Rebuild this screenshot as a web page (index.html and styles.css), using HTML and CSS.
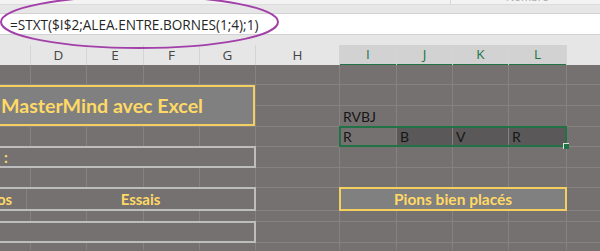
FILE: index.html
```html
<!DOCTYPE html>
<html lang="fr">
<head>
<meta charset="utf-8">
<title>MasterMind avec Excel</title>
<link rel="stylesheet" href="styles.css">
</head>
<body>
<div class="app">
  <div class="ribbon"><span class="ribbon-sep"></span><span class="ribbon-label">Nombre</span></div>
  <div class="namebar"></div>
  <div class="formula"><span class="formula-text">=STXT($I$2;ALEA.ENTRE.BORNES(1;4);1)</span></div>
  <div class="spacer"></div>
  <div class="heads">
    <div class="head"></div>
    <div class="head">D</div>
    <div class="head">E</div>
    <div class="head">F</div>
    <div class="head">G</div>
    <div class="head">H</div>
    <div class="head sel">I</div>
    <div class="head sel">J</div>
    <div class="head sel">K</div>
    <div class="head sel">L</div>
    <div class="head blank"></div>
  </div>
  <div class="sheet">
    <div class="box title"><span>MasterMind avec Excel</span></div>
    <div class="box gray r5">:</div>
    <div class="box gray r7 split"><span class="part-a">os</span><span class="part-b">Essais</span></div>
    <div class="box gray r9"></div>
    <div class="box pions">Pions bien placés</div>
    <div class="cell rvbj">RVBJ</div>
    <div class="cell pick c7">R</div>
    <div class="cell pick c8 shade">B</div>
    <div class="cell pick c9 shade">V</div>
    <div class="cell pick c10 shade">R</div>

    <div class="cell"></div><div class="cell"></div><div class="cell"></div><div class="cell"></div><div class="cell"></div><div class="cell"></div><div class="cell"></div><div class="cell"></div><div class="cell"></div><div class="cell"></div>
    <div class="cell"></div><div class="cell"></div><div class="cell"></div><div class="cell"></div><div class="cell"></div><div class="cell"></div><div class="cell"></div><div class="cell"></div><div class="cell"></div><div class="cell"></div>
    <div class="cell"></div><div class="cell"></div><div class="cell"></div><div class="cell"></div><div class="cell"></div><div class="cell"></div><div class="cell"></div><div class="cell"></div><div class="cell"></div><div class="cell"></div>
    <div class="cell"></div><div class="cell"></div><div class="cell"></div><div class="cell"></div><div class="cell"></div><div class="cell"></div><div class="cell"></div><div class="cell"></div><div class="cell"></div><div class="cell"></div>
    <div class="cell"></div><div class="cell"></div><div class="cell"></div><div class="cell"></div><div class="cell"></div><div class="cell"></div><div class="cell"></div><div class="cell"></div><div class="cell"></div><div class="cell"></div>
    <div class="cell"></div><div class="cell"></div><div class="cell"></div><div class="cell"></div><div class="cell"></div><div class="cell"></div><div class="cell"></div><div class="cell"></div><div class="cell"></div><div class="cell"></div>
    <div class="cell"></div><div class="cell"></div><div class="cell"></div><div class="cell"></div><div class="cell"></div><div class="cell"></div><div class="cell"></div><div class="cell"></div><div class="cell"></div><div class="cell"></div>
    <div class="cell"></div><div class="cell"></div><div class="cell"></div><div class="cell"></div><div class="cell"></div><div class="cell"></div><div class="cell"></div><div class="cell"></div><div class="cell"></div><div class="cell"></div>
    <div class="cell"></div><div class="cell"></div><div class="cell"></div><div class="cell"></div><div class="cell"></div><div class="cell"></div><div class="cell"></div><div class="cell"></div><div class="cell"></div><div class="cell"></div>

    <div class="selection"><span class="handle"></span></div>
  </div>
  <svg class="ellipse" width="300" height="60" viewBox="0 0 300 60">
    <ellipse cx="139.5" cy="22" rx="138.5" ry="26" fill="none" stroke="#a23fa8" stroke-width="2"/>
  </svg>
</div>
</body>
</html>
```

FILE: styles.css
```css
* { box-sizing: border-box; }
html, body { margin: 0; padding: 0; }
body {
  width: 600px;
  height: 251px;
  overflow: hidden;
  background: #767171;
  font-family: "Open Sans", "Noto Sans", sans-serif;
}
.app {
  position: relative;
  width: 600px;
  height: 251px;
  overflow: hidden;
}
.ribbon {
  position: relative;
  height: 5px;
  background: #f3f3f3;
  border-bottom: 1px solid #dcdcdc;
}
.ribbon-sep {
  position: absolute;
  left: 450px;
  top: 0;
  width: 1px;
  height: 4px;
  background: #d8d8d8;
}
.ribbon-label {
  position: absolute;
  left: 506px;
  top: -11px;
  font-size: 11px;
  color: #a8a8a8;
}
.namebar {
  height: 9px;
  background: #e6e6e6;
  border-bottom: 1px solid #d2d2d2;
}
.formula {
  height: 21px;
  background: #ffffff;
  border-bottom: 1px solid #d2d2d2;
  display: flex;
  align-items: center;
  padding-left: 10px;
}
.formula-text {
  font-size: 13.6px;
  color: #262626;
}
.spacer {
  height: 10px;
  background: #e6e6e6;
}
.heads {
  display: grid;
  grid-template-columns: 30px 55px 56px 55px 55px 83px 56px 55px 55px 57px 1fr;
  column-gap: 1px;
  height: 20px;
  background: #d4d4d4;
}
.head {
  background: #e6e6e6;
  color: #444444;
  font-size: 13.5px;
  display: flex;
  align-items: center;
  justify-content: center;
  padding-bottom: 1px;
  border-bottom: 1px solid #c8c8c8;
}
.head.sel {
  background: #d2d2d2;
  color: #217346;
  border-bottom: 2px solid #217346;
}
.sheet {
  position: relative;
  display: grid;
  grid-template-columns: 30px 55px 56px 55px 55px 83px 56px 55px 55px 57px 1fr;
  grid-template-rows: 19px 20px 20px 19px 20px 19px 22px 10px 20px 20px;
  grid-auto-rows: 20px;
  gap: 1px;
  background: #878282;
  height: 185px;
}
.cell {
  background: #767171;
  font-family: "Lato", "Open Sans", sans-serif;
  font-size: 14px;
  color: #161616;
  padding-left: 3px;
  display: flex;
  align-items: flex-end;
  line-height: 18px;
}
.box {
  display: flex;
  align-items: center;
  font-family: "Lato", "Open Sans", sans-serif;
  font-weight: bold;
  color: #ffd966;
  grid-column: 1 / 6;
  z-index: 1;
}
.title {
  grid-row: 2 / 4;
  background: #808080;
  border: 2px solid #f2cf5e;
  border-left: none;
  font-size: 19.6px;
  padding-left: 1px;
}
.gray {
  background: #767171;
  border: 2px solid #bdbdbd;
  border-left: none;
  margin: -1px -1px -1px 0;
  font-size: 15px;
}
.r5 { grid-row: 5; padding-left: 4px; }
.r7 { grid-row: 7; }
.r9 { grid-row: 9; }
.split { align-items: stretch; }
.part-a {
  width: 30px;
  display: flex;
  align-items: center;
  margin-left: -3px;
  border-right: 1px solid #878282;
}
.part-b {
  flex: 1;
  display: flex;
  align-items: center;
  justify-content: center;
}
.pions {
  grid-column: 7 / 11;
  grid-row: 7;
  background: #808080;
  border: 2px solid #f2cf5e;
  margin: -1px;
  justify-content: center;
  font-size: 15.5px;
}
.rvbj { grid-column: 7; grid-row: 3; }
.pick { grid-row: 4; z-index: 1; }
.c7 { grid-column: 7; }
.c8 { grid-column: 8; }
.c9 { grid-column: 9; }
.c10 { grid-column: 10; }
.shade { background: #5a5858; }
.selection {
  grid-column: 7 / 11;
  grid-row: 4;
  margin: -1px;
  border: 2px solid #217346;
  z-index: 2;
  position: relative;
  pointer-events: none;
}
.handle {
  position: absolute;
  right: -4px;
  bottom: -4px;
  width: 6px;
  height: 6px;
  background: #217346;
  border-top: 1px solid #e0e0e0;
  border-left: 1px solid #e0e0e0;
}
.ellipse {
  position: absolute;
  left: 0;
  top: 0;
  z-index: 5;
}
```
